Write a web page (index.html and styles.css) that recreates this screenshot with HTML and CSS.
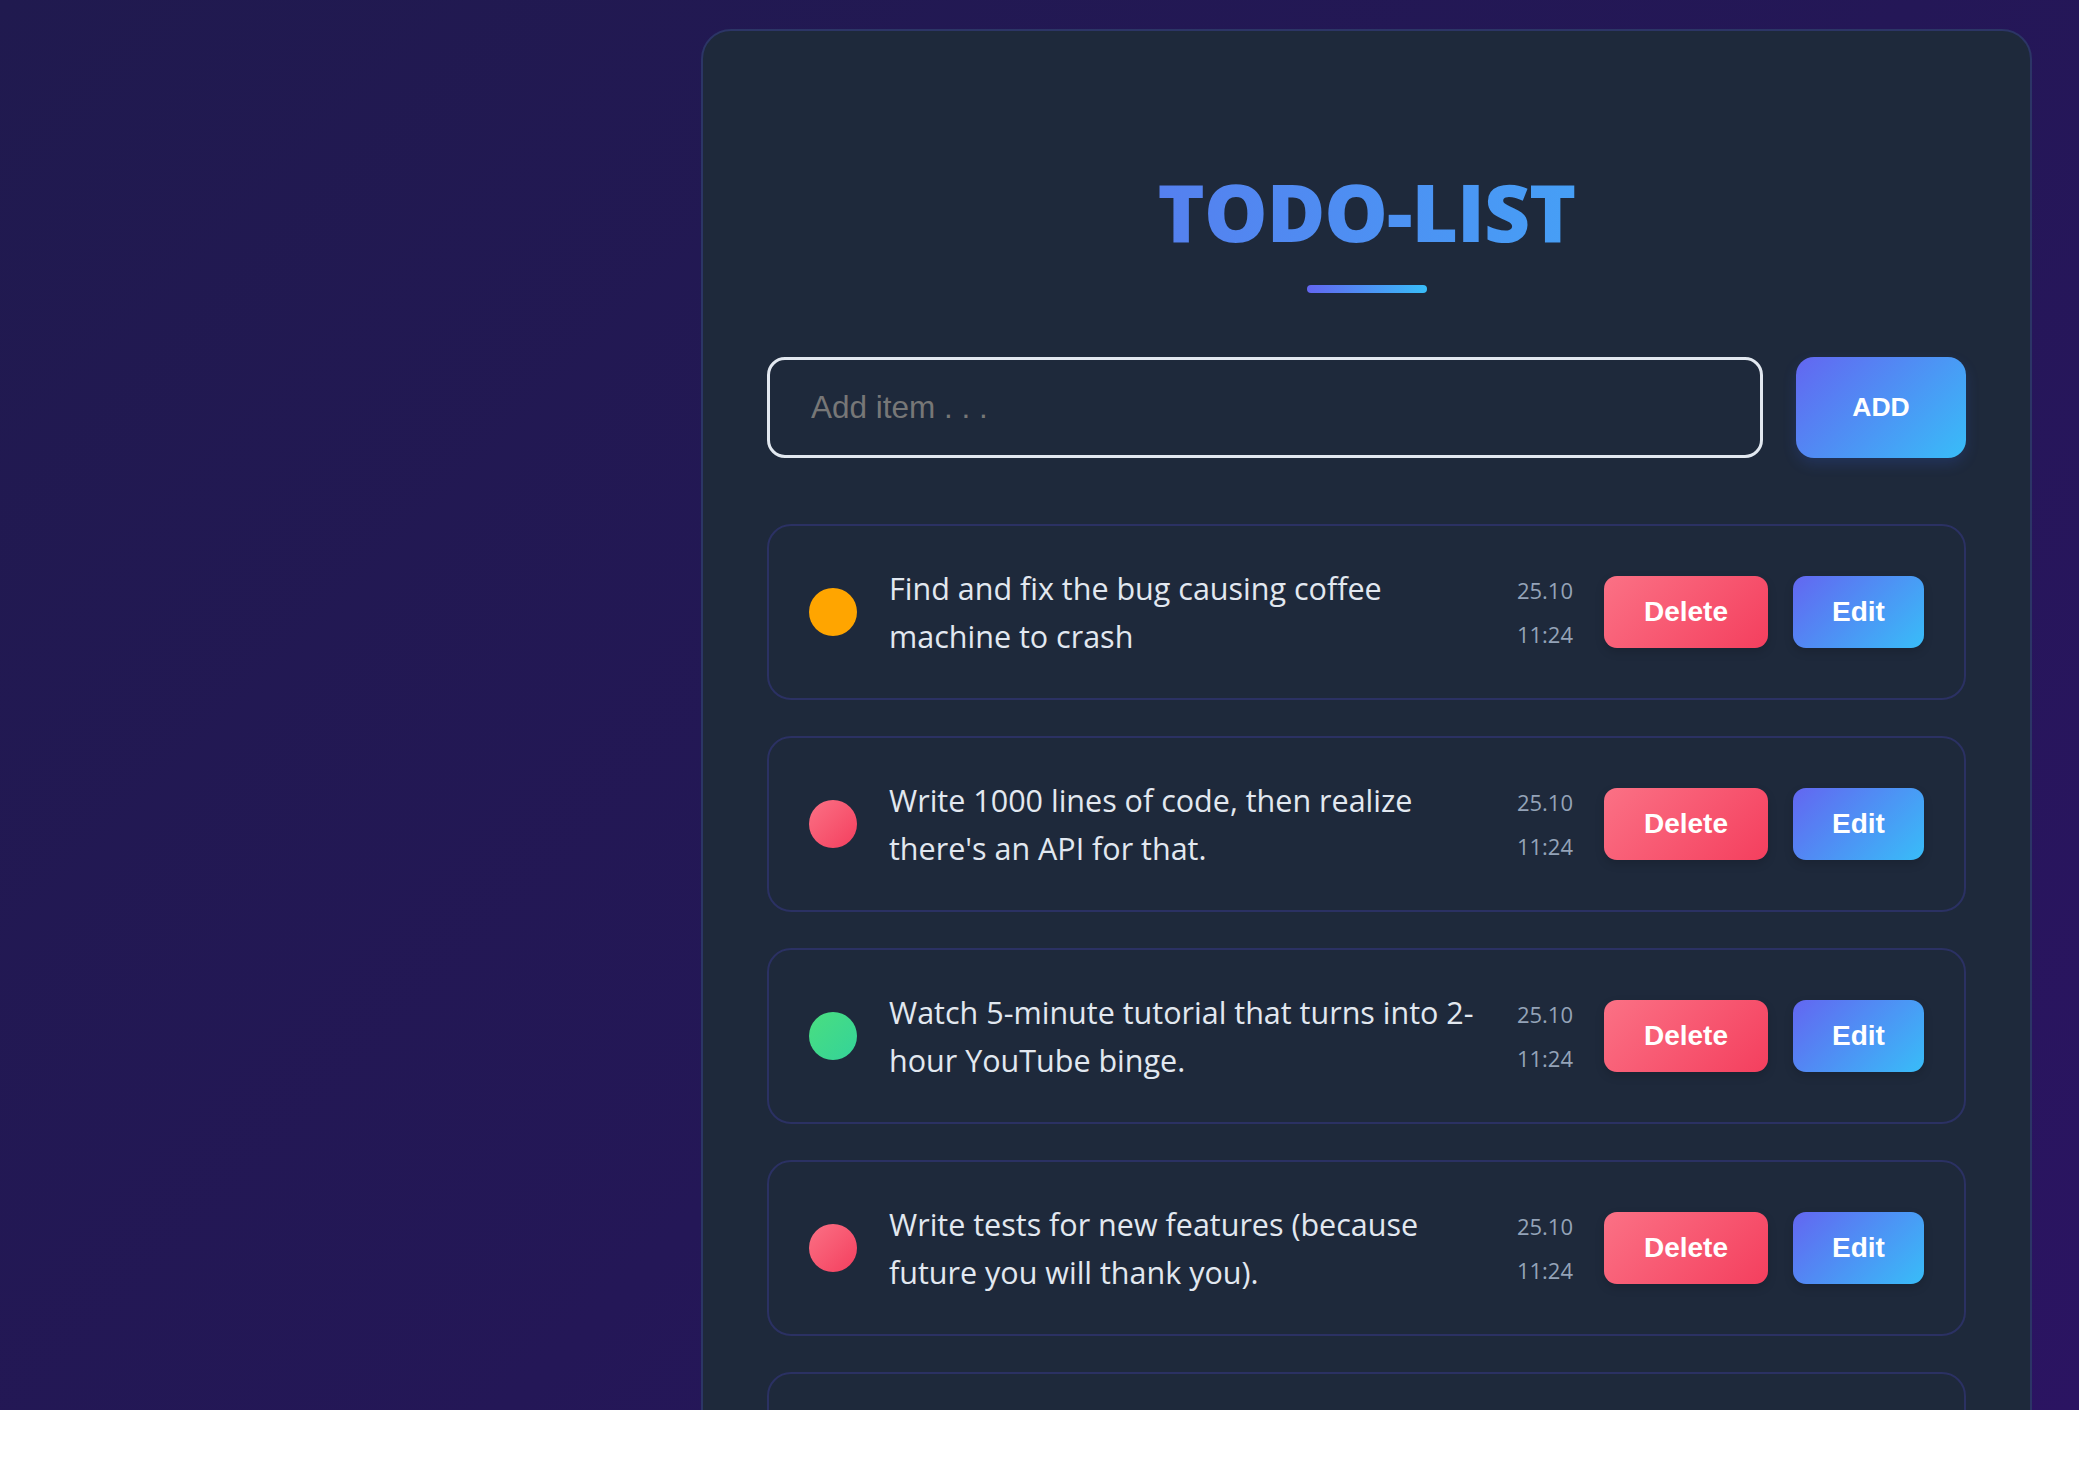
FILE: index.html
```html
<!DOCTYPE html>
<html lang="en">
<head>
<meta charset="utf-8">
<title>TODO-LIST</title>
<link rel="stylesheet" href="styles.css">
</head>
<body>
<div class="page">
  <main class="card">
    <h1 class="title">TODO-LIST</h1>
    <div class="title-bar"></div>
    <form class="add-form">
      <input class="add-input" type="text" placeholder="Add item . . .">
      <button class="add-btn" type="button">ADD</button>
    </form>
    <ul class="list">
      <li class="item">
        <span class="dot dot-orange"></span>
        <p class="item-text">Find and fix the bug causing coffee machine to crash</p>
        <div class="item-date"><span>25.10</span><span>11:24</span></div>
        <button class="btn btn-delete" type="button">Delete</button>
        <button class="btn btn-edit" type="button">Edit</button>
      </li>
      <li class="item">
        <span class="dot dot-red"></span>
        <p class="item-text">Write 1000 lines of code, then realize there's an API for that.</p>
        <div class="item-date"><span>25.10</span><span>11:24</span></div>
        <button class="btn btn-delete" type="button">Delete</button>
        <button class="btn btn-edit" type="button">Edit</button>
      </li>
      <li class="item">
        <span class="dot dot-green"></span>
        <p class="item-text">Watch 5-minute tutorial that turns into 2-hour YouTube binge.</p>
        <div class="item-date"><span>25.10</span><span>11:24</span></div>
        <button class="btn btn-delete" type="button">Delete</button>
        <button class="btn btn-edit" type="button">Edit</button>
      </li>
      <li class="item">
        <span class="dot dot-red"></span>
        <p class="item-text">Write tests for new features (because future you will thank you).</p>
        <div class="item-date"><span>25.10</span><span>11:24</span></div>
        <button class="btn btn-delete" type="button">Delete</button>
        <button class="btn btn-edit" type="button">Edit</button>
      </li>
      <li class="item item-partial"></li>
    </ul>
  </main>
</div>
</body>
</html>
```
FILE: styles.css
```css
* { box-sizing: border-box; }

html, body {
  margin: 0;
  padding: 0;
  background: #ffffff;
}

.page {
  height: 1410px;
  overflow: hidden;
  display: flex;
  justify-content: flex-end;
  align-items: flex-start;
  padding: 29px 47px 0 0;
  background: linear-gradient(135deg, #201a4f 0%, #241757 55%, #2b1462 100%);
}

.card {
  width: 1331px;
  background: #1e293b;
  border: 2px solid #2c3566;
  border-radius: 30px;
  padding: 132px 64px 40px 64px;
  display: flex;
  flex-direction: column;
  align-items: center;
}

.card > * { flex: none; }

.title {
  margin: 0;
  font-family: "Open Sans", "Noto Sans", sans-serif;
  font-weight: 800;
  font-size: 80px;
  line-height: 96px;
  letter-spacing: -1px;
  background: linear-gradient(90deg, #5580ef, #469ff6);
  -webkit-background-clip: text;
  background-clip: text;
  color: transparent;
}

.title-bar {
  width: 120px;
  height: 8px;
  border-radius: 4px;
  margin-top: 26px;
  background: linear-gradient(90deg, #6366f1, #38bdf8);
}

.add-form {
  align-self: stretch;
  display: flex;
  gap: 33px;
  margin: 64px 0 0 0;
}

.add-input {
  flex: 1;
  height: 101px;
  border: 3px solid #e2e8f0;
  border-radius: 18px;
  background: #1e293b;
  padding: 0 41px;
  font-family: "Liberation Sans", Arial, sans-serif;
  font-size: 31.5px;
  color: #e2e8f0;
  outline: none;
}

.add-input::placeholder {
  color: #777777;
}

.add-btn {
  width: 170px;
  height: 101px;
  border: none;
  border-radius: 18px;
  background: linear-gradient(135deg, #6366f1, #38bdf8);
  color: #ffffff;
  font-family: "Liberation Sans", Arial, sans-serif;
  font-weight: 700;
  font-size: 26.5px;
  box-shadow: 0 6px 14px rgba(56, 100, 240, 0.18);
}

.list {
  align-self: stretch;
  list-style: none;
  margin: 66px 0 0 0;
  padding: 0;
  display: flex;
  flex-direction: column;
  gap: 36px;
}

.item {
  flex: none;
  display: flex;
  align-items: center;
  border: 2px solid #2b3163;
  border-radius: 24px;
  padding: 38px 40px;
  min-height: 176px;
}

.dot {
  flex: none;
  width: 48px;
  height: 48px;
  border-radius: 50%;
  margin-right: 32px;
}

.dot-orange { background: #ffa500; }
.dot-red { background: linear-gradient(135deg, #fb7185, #f43f5e); }
.dot-green { background: linear-gradient(135deg, #4ade80, #34d399); }

.item-text {
  flex: 1;
  margin: 0 26px 0 0;
  font-family: "Open Sans", "Noto Sans", sans-serif;
  font-size: 30.5px;
  line-height: 48px;
  color: #e2e8f0;
}

.item-date {
  flex: none;
  display: flex;
  flex-direction: column;
  gap: 12px;
  font-family: "Open Sans", "Noto Sans", sans-serif;
  font-size: 22px;
  line-height: 32px;
  color: #94a3b8;
  margin-right: 31px;
}

.btn {
  flex: none;
  height: 72px;
  border: none;
  border-radius: 13px;
  color: #ffffff;
  font-family: "Liberation Sans", Arial, sans-serif;
  font-weight: 700;
  font-size: 28px;
  box-shadow: 0 4px 10px rgba(0, 0, 0, 0.15);
}

.btn-delete {
  width: 164px;
  background: linear-gradient(135deg, #fb7185, #f43f5e);
}

.btn-edit {
  width: 131px;
  margin-left: 25px;
  background: linear-gradient(135deg, #6366f1, #38bdf8);
}
```
